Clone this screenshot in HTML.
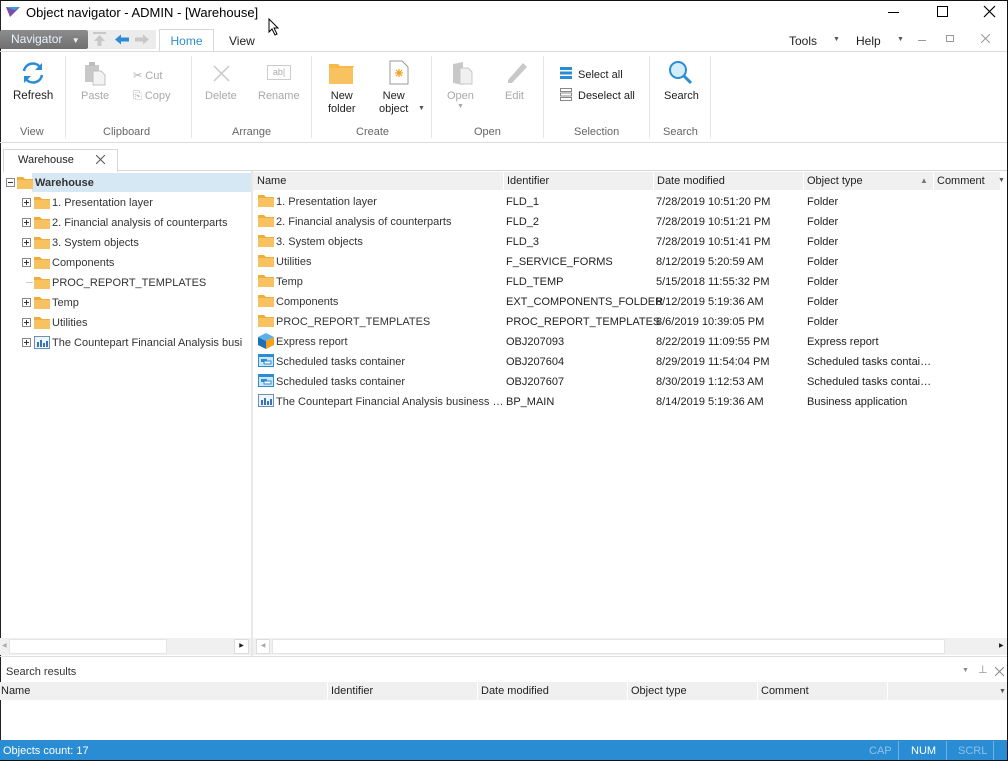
<!DOCTYPE html>
<html><head><meta charset="utf-8">
<style>
*{margin:0;padding:0;box-sizing:border-box}
body{width:1008px;height:761px;overflow:hidden;background:#fff;font-family:"Liberation Sans",sans-serif;font-size:11px;color:#1e1e1e;position:relative}
.a{position:absolute;white-space:nowrap}
.g{color:#a8a8a8}
.lbl{color:#666;font-size:11px}
.row{position:absolute;left:253px;width:747px;height:20px;line-height:20px}
.row span{position:absolute;top:1px}
.pl{position:absolute;width:9px;height:9px;border:1px solid #888;background:#fff}
.pl:before{content:"";position:absolute;left:1px;top:3px;width:5px;height:1px;background:#333}
.pl.p:after{content:"";position:absolute;left:3px;top:1px;width:1px;height:5px;background:#333}
.sep{position:absolute;top:56px;width:1px;height:82px;background:#e6e6e6}
.r{margin-top:2px}
</style></head><body>
<div class="a" style="left:0;top:0;width:1008px;height:761px;border:1px solid #222;border-top:1px solid #111"></div>
<!-- title -->
<svg class="a" style="left:6px;top:7px" width="14" height="10"><polygon points="0,0 14,0 8,6 4,10" fill="#7a4fa8"/><polygon points="0,0 14,0 9,3" fill="#3aa0e0"/></svg>
<div class="a" style="left:26px;top:5px;font-size:13px;color:#000">Object navigator - ADMIN - [Warehouse]</div>
<svg class="a" style="left:268px;top:18px" width="12" height="18"><path d="M1 1 L1 14 L4 11 L7 17 L9 16 L6 10 L10 10 Z" fill="#fff" stroke="#000"/></svg>
<div class="a" style="left:888px;top:12px;width:11px;height:1px;background:#000"></div>
<div class="a" style="left:937px;top:6px;width:11px;height:11px;border:1px solid #000"></div>
<svg class="a" style="left:983px;top:5px" width="13" height="13"><path d="M1 1L12 12M12 1L1 12" stroke="#000" stroke-width="1.2"/></svg>
<!-- menu row -->
<div class="a" style="left:0;top:30px;width:88px;height:19px;background:linear-gradient(#8d8d8d,#6f6f6f);border-radius:2px;color:#e8f3ff;font-size:12px;line-height:19px;padding-left:11px">Navigator <span style="font-size:8px;margin-left:6px">▼</span></div>
<div class="a" style="left:88px;top:30px;width:68px;height:19px;background:#ececec"></div>
<svg class="a" style="left:92px;top:32px" width="60" height="15"><path d="M1 1h13" stroke="#c8c8c8" stroke-width="2"/><path d="M7.5 3L2 9h3.5v5h4v-5H13z" fill="#c8c8c8"/><path d="M23 7.5l6-5v3h8v4h-8v3z" fill="#2a8dd4"/><path d="M57 7.5l-6-5v3h-8v4h8v3z" fill="#c8c8c8"/></svg>
<div class="a" style="left:159px;top:29px;width:55px;height:23px;border:1px solid #d8d8d8;border-bottom:none;background:#fff;color:#2a8dd4;font-size:12px;text-align:center;line-height:23px">Home</div>
<div class="a" style="left:229px;top:34px;font-size:12px">View</div>
<div class="a" style="left:789px;top:34px;font-size:12px">Tools</div><div class="a" style="left:833px;top:36px;font-size:7px;color:#555">▼</div>
<div class="a" style="left:856px;top:34px;font-size:12px">Help</div><div class="a" style="left:897px;top:36px;font-size:7px;color:#555">▼</div>
<div class="a" style="left:918px;top:40px;width:8px;height:1px;background:#999"></div>
<div class="a" style="left:946px;top:35px;width:8px;height:7px;border:1px solid #999"></div>
<svg class="a" style="left:981px;top:34px" width="9" height="9"><path d="M0 0L9 9M9 0L0 9" stroke="#999"/></svg>
<div class="a" style="left:0;top:51px;width:1007px;height:1px;background:#dcdcdc"></div>
<!-- ribbon -->
<svg class="a" style="left:20px;top:60px" width="26" height="26"><path d="M4 11a9 9 0 0 1 16-4" stroke="#2a8dd4" stroke-width="2.5" fill="none"/><path d="M22 3v7h-7z" fill="#2a8dd4"/><path d="M22 15a9 9 0 0 1-16 4" stroke="#2a8dd4" stroke-width="2.5" fill="none"/><path d="M4 23v-7h7z" fill="#2a8dd4"/></svg>
<div class="a" style="left:13px;top:90px;font-size:11.5px">Refresh</div>
<div class="a lbl" style="left:20px;top:126px">View</div>
<div class="sep" style="left:65px"></div>
<svg class="a" style="left:84px;top:62px" width="22" height="24"><rect x="1" y="3" width="14" height="17" fill="#c8c8c8"/><rect x="5" y="0" width="6" height="4" fill="#bdbdbd"/><path d="M9 9h8l4 4v10H9z" fill="#f3f3f3" stroke="#c0c0c0"/></svg>
<div class="a g" style="left:81px;top:90px">Paste</div>
<div class="a g" style="left:133px;top:69px">✂ Cut</div>
<div class="a g" style="left:133px;top:90px">⎘ Copy</div>
<div class="a lbl" style="left:103px;top:126px">Clipboard</div>
<div class="sep" style="left:191px"></div>
<svg class="a" style="left:213px;top:65px" width="17" height="17"><path d="M1 1L16 16M16 1L1 16" stroke="#c8c8c8" stroke-width="1.5"/></svg>
<div class="a g" style="left:205px;top:90px">Delete</div>
<div class="a" style="left:267px;top:65px;width:24px;height:15px;border:1px solid #ccc;color:#aaa;font-size:9px;text-align:center;line-height:13px">ab|</div>
<div class="a g" style="left:258px;top:90px">Rename</div>
<div class="a lbl" style="left:232px;top:126px">Arrange</div>
<div class="sep" style="left:311px"></div>
<svg class="a" style="left:329px;top:62px" width="26" height="22"><path d="M0 2h9l2 2h14v18H0z" fill="#f7b94a"/><rect x="0" y="6" width="25" height="16" fill="#f8c261"/><rect x="24" y="5" width="1" height="17" fill="#fff"/></svg>
<div class="a" style="left:328px;top:90px;text-align:center;line-height:13px">New<br>folder</div>
<svg class="a" style="left:389px;top:60px" width="20" height="25"><path d="M1 1h12l6 6v17H1z" fill="#fff" stroke="#999"/><path d="M10 9v8M6 13h8M7 10l6 6M13 10l-6 6" stroke="#f0a020" stroke-width="1.2"/></svg>
<div class="a" style="left:379px;top:90px;text-align:center;line-height:13px">New<br>object</div><div class="a" style="left:418px;top:105px;font-size:7px;color:#555">▼</div>
<div class="a lbl" style="left:356px;top:126px">Create</div>
<div class="sep" style="left:431px"></div>
<svg class="a" style="left:452px;top:62px" width="22" height="24"><path d="M1 2l10-2v23l-10-2z" fill="#c8c8c8"/><path d="M8 6h8l4 4v12H8z" fill="#f0f0f0" stroke="#c8c8c8"/></svg>
<div class="a g" style="left:447px;top:90px">Open</div><div class="a g" style="left:457px;top:103px;font-size:7px">▼</div>
<svg class="a" style="left:504px;top:60px" width="24" height="24"><path d="M4 20L19 3l4 4L8 23H4z" fill="#c8c8c8"/></svg>
<div class="a g" style="left:505px;top:90px">Edit</div>
<div class="a lbl" style="left:474px;top:126px">Open</div>
<div class="sep" style="left:543px"></div>
<svg class="a" style="left:560px;top:67px" width="13" height="36"><rect x="0" y="0" width="12" height="3" fill="#2a8dd4"/><rect x="0" y="4.5" width="12" height="3" fill="#2a8dd4"/><rect x="0" y="9" width="12" height="3" fill="#2a8dd4"/><rect x="0.5" y="21.5" width="11" height="3" fill="none" stroke="#888"/><rect x="0.5" y="26" width="11" height="3" fill="none" stroke="#888"/><rect x="0.5" y="30.5" width="11" height="3" fill="none" stroke="#888"/></svg>
<div class="a" style="left:578px;top:69px">Select all</div>
<div class="a" style="left:578px;top:90px">Deselect all</div>
<div class="a lbl" style="left:574px;top:126px">Selection</div>
<div class="sep" style="left:649px"></div>
<svg class="a" style="left:668px;top:60px" width="26" height="26"><circle cx="10" cy="10" r="8" fill="#d5ecfa" stroke="#2a8dd4" stroke-width="2"/><path d="M16 16l7 7" stroke="#2a8dd4" stroke-width="3"/></svg>
<div class="a" style="left:664px;top:90px">Search</div>
<div class="a lbl" style="left:663px;top:126px">Search</div>
<div class="sep" style="left:710px"></div>
<div class="a" style="left:0;top:142px;width:1007px;height:1px;background:#dcdcdc"></div>
<!-- doc tab -->
<div class="a" style="left:3px;top:149px;width:115px;height:23px;border:1px solid #d8d8d8;border-bottom:none;background:#fff"></div>
<div class="a" style="left:18px;top:154px">Warehouse</div>
<svg class="a" style="left:96px;top:155px" width="9" height="9"><path d="M0 0L9 9M9 0L0 9" stroke="#555"/></svg>
<div class="a" style="left:118px;top:170px;width:889px;height:1px;background:#d8d8d8"></div>
<!-- tree -->
<div class="a" style="left:32px;top:173px;width:219px;height:19px;background:#d7e8f5"></div>
<div class="pl" style="left:6px;top:178px"></div>
<svg class="a" style="left:17px;top:176px" width="16" height="13"><path d="M0 1h6l2 2h8v10H0z" fill="#f0ad3c"/><rect x="0" y="4" width="16" height="9" fill="#f8c261"/></svg>
<div class="a" style="left:35px;top:177px;font-weight:bold;color:#333">Warehouse</div>
<div id="tree"></div>
<!-- splitter -->
<div class="a" style="left:251px;top:171px;width:2px;height:485px;background:#e8e8e8"></div>
<!-- grid header -->
<div class="a" style="left:253px;top:172px;width:747px;height:18px;background:#f0f0f0"></div>
<div class="a" style="left:503px;top:172px;width:1px;height:18px;background:#fff"></div>
<div class="a" style="left:653px;top:172px;width:1px;height:18px;background:#fff"></div>
<div class="a" style="left:803px;top:172px;width:1px;height:18px;background:#fff"></div>
<div class="a" style="left:933px;top:172px;width:1px;height:18px;background:#fff"></div>
<div class="a" style="left:257px;top:175px">Name</div>
<div class="a" style="left:507px;top:175px">Identifier</div>
<div class="a" style="left:657px;top:175px">Date modified</div>
<div class="a" style="left:807px;top:175px">Object type</div>
<div class="a" style="left:920px;top:176px;font-size:8px;color:#777">▲</div>
<div class="a" style="left:937px;top:175px">Comment</div>
<div class="a" style="left:998px;top:177px;font-size:7px;color:#555">▼</div>
<div id="grid"></div>
<!-- scrollbars -->
<div class="a" style="left:0;top:638px;width:251px;height:17px;background:#f0f0f0"></div>
<div class="a" style="left:9px;top:639px;width:158px;height:15px;background:#fff;border:1px solid #e5e5e5"></div>
<div class="a" style="left:234px;top:639px;width:15px;height:15px;background:#fff;border:1px solid #ddd;font-size:6px;text-align:center;line-height:13px">▶</div>
<div class="a" style="left:253px;top:638px;width:754px;height:17px;background:#f0f0f0"></div>
<div class="a" style="left:272px;top:639px;width:673px;height:15px;background:#fff;border:1px solid #e5e5e5"></div>
<div class="a" style="left:256px;top:639px;width:14px;height:15px;background:#fff;border:1px solid #ddd;font-size:6px;text-align:center;line-height:13px;color:#aaa">◀</div>
<div class="a" style="left:2px;top:642px;font-size:6px;color:#aaa">◀</div>
<div class="a" style="left:999px;top:642px;font-size:6px">▶</div>
<div class="a" style="left:0;top:656px;width:1007px;height:1px;background:#e0e0e0"></div>
<!-- search results -->
<div class="a" style="left:6px;top:666px;color:#333">Search results</div>
<div class="a" style="left:962px;top:667px;font-size:7px;color:#888">▼</div>
<div class="a" style="left:978px;top:663px;color:#888;font-size:11px">⊥</div>
<svg class="a" style="left:995px;top:667px" width="9" height="9"><path d="M0 0L9 9M9 0L0 9" stroke="#888"/></svg>
<div class="a" style="left:0;top:682px;width:1007px;height:18px;background:#f0f0f0"></div>
<div class="a" style="left:327px;top:682px;width:1px;height:18px;background:#fff"></div>
<div class="a" style="left:477px;top:682px;width:1px;height:18px;background:#fff"></div>
<div class="a" style="left:627px;top:682px;width:1px;height:18px;background:#fff"></div>
<div class="a" style="left:757px;top:682px;width:1px;height:18px;background:#fff"></div>
<div class="a" style="left:887px;top:682px;width:1px;height:18px;background:#fff"></div>
<div class="a" style="left:1px;top:685px">Name</div>
<div class="a" style="left:331px;top:685px">Identifier</div>
<div class="a" style="left:481px;top:685px">Date modified</div>
<div class="a" style="left:631px;top:685px">Object type</div>
<div class="a" style="left:761px;top:685px">Comment</div>
<div class="a" style="left:999px;top:688px;font-size:7px;color:#555">▼</div>
<!-- status -->
<div class="a" style="left:0;top:740px;width:1008px;height:21px;background:#2a8dd4"></div>
<div class="a" style="left:3px;top:745px;color:#fff">Objects count: 17</div>
<div class="a" style="left:869px;top:745px;color:#8cc2ea">CAP</div>
<div class="a" style="left:898px;top:741px;width:1px;height:19px;background:#6fb3e3"></div>
<div class="a" style="left:911px;top:745px;color:#fff">NUM</div>
<div class="a" style="left:946px;top:741px;width:1px;height:19px;background:#6fb3e3"></div>
<div class="a" style="left:958px;top:745px;color:#8cc2ea">SCRL</div>
<div class="a" style="left:993px;top:741px;width:1px;height:19px;background:#6fb3e3"></div>
<div class="a" style="left:1007px;top:0;width:1px;height:761px;background:#111"></div>
<div class="a" style="left:0;top:760px;width:1008px;height:1px;background:#111"></div>
<script>
var fold='<svg width="16" height="13"><path d="M0 1h6l2 2h8v10H0z" fill="#f0ad3c"/><rect x="0" y="4" width="16" height="9" fill="#f8c261"/></svg>';
var biz='<svg width="16" height="13"><rect x="0.5" y="0.5" width="15" height="12" fill="#eef5fb" stroke="#6a8fb8"/><rect x="3" y="6" width="2" height="5" fill="#3b73b8"/><rect x="6" y="4" width="2" height="7" fill="#3b73b8"/><rect x="9" y="7" width="2" height="4" fill="#3b73b8"/><rect x="12" y="5" width="2" height="6" fill="#3b73b8"/></svg>';
var sched='<svg width="16" height="13"><rect x="0" y="0" width="16" height="13" fill="#2a8dd4"/><rect x="1" y="3" width="14" height="9" fill="#cfe6f7"/><rect x="3" y="5" width="6" height="3" fill="#2a8dd4"/><rect x="6" y="7" width="7" height="3" fill="#fff" stroke="#2a8dd4"/></svg>';
var cube='<svg width="16" height="16"><path d="M8 0L16 4L8 8L0 4z" fill="#5bb0e8"/><path d="M0 4L8 8V16L0 12z" fill="#1e6fb8"/><path d="M16 4L8 8V16L16 12z" fill="#f3a21a"/></svg>';
var t=[["1. Presentation layer",1,fold],["2. Financial analysis of counterparts",1,fold],["3. System objects",1,fold],["Components",1,fold],["PROC_REPORT_TEMPLATES",0,fold],["Temp",1,fold],["Utilities",1,fold],["The Countepart Financial Analysis busi",1,biz]];
var h='';t.forEach(function(r,i){var y=193+i*20;
if(r[1])h+='<div class="pl p" style="left:22px;top:'+(y+5)+'px"></div>';else h+='<div class="a" style="left:26px;top:'+(y+9)+'px;width:7px;height:1px;background:#ccc"></div>';
h+='<div class="a" style="left:34px;top:'+(y+3)+'px">'+r[2]+'</div><div class="a" style="left:52px;top:'+(y+4)+'px;color:#333">'+r[0]+'</div>';});
document.getElementById('tree').innerHTML=h;
var g=[["1. Presentation layer","FLD_1","7/28/2019 10:51:20 PM","Folder",fold],["2. Financial analysis of counterparts","FLD_2","7/28/2019 10:51:21 PM","Folder",fold],["3. System objects","FLD_3","7/28/2019 10:51:41 PM","Folder",fold],["Utilities","F_SERVICE_FORMS","8/12/2019 5:20:59 AM","Folder",fold],["Temp","FLD_TEMP","5/15/2018 11:55:32 PM","Folder",fold],["Components","EXT_COMPONENTS_FOLDER","8/12/2019 5:19:36 AM","Folder",fold],["PROC_REPORT_TEMPLATES","PROC_REPORT_TEMPLATES","8/6/2019 10:39:05 PM","Folder",fold],["Express report","OBJ207093","8/22/2019 11:09:55 PM","Express report",cube],["Scheduled tasks container","OBJ207604","8/29/2019 11:54:04 PM","Scheduled tasks contai…",sched],["Scheduled tasks container","OBJ207607","8/30/2019 1:12:53 AM","Scheduled tasks contai…",sched],["The Countepart Financial Analysis business …","BP_MAIN","8/14/2019 5:19:36 AM","Business application",biz]];
h='';g.forEach(function(r,i){var y=191+i*20;
h+='<div class="row" style="top:'+y+'px"><span style="left:5px;top:'+(r[4]==cube?2:3)+'px;line-height:0">'+r[4]+'</span><span style="left:23px;color:#333">'+r[0]+'</span><span style="left:253px">'+r[1]+'</span><span style="left:403px">'+r[2]+'</span><span style="left:554px">'+r[3]+'</span></div>';});
document.getElementById('grid').innerHTML=h;
</script>
</body></html>
